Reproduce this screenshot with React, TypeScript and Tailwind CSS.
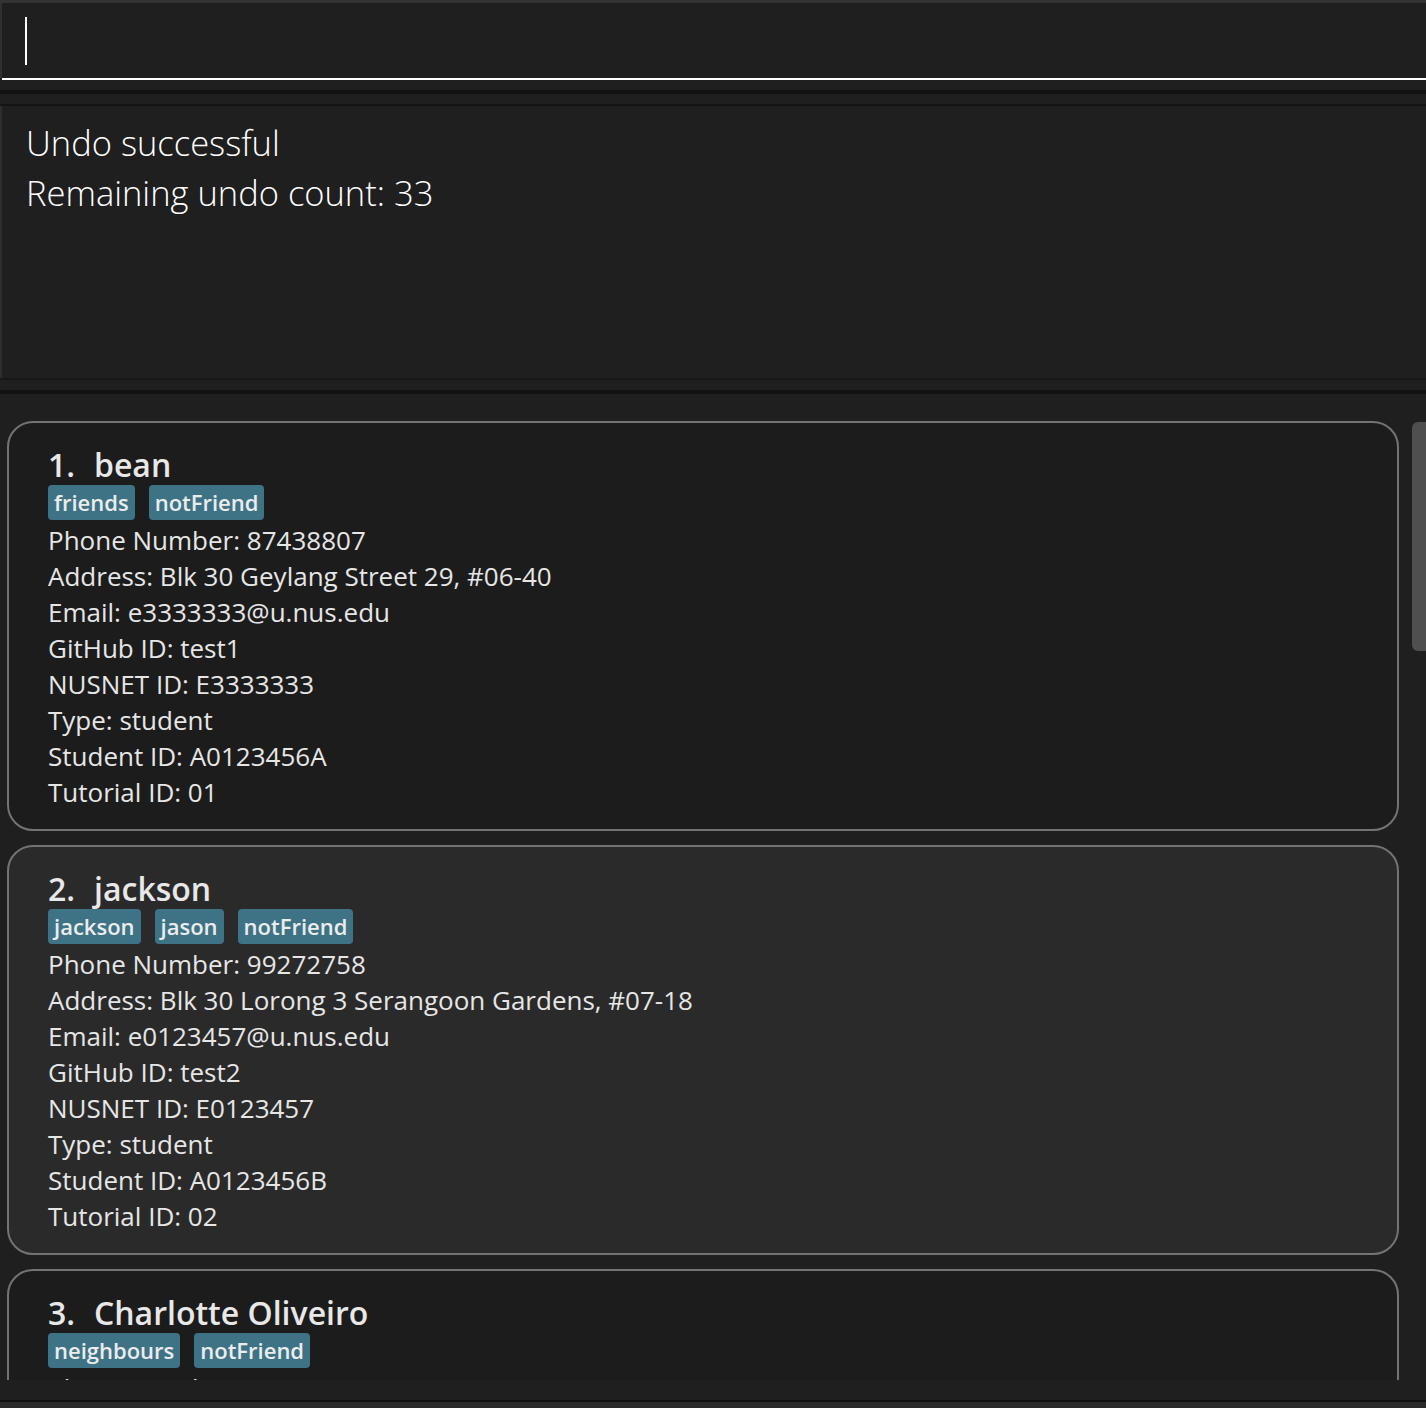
import React from 'react';

interface Person {
  name: string;
  tags: string[];
  phone: string;
  address: string;
  email: string;
  github: string;
  nusnet: string;
  type: string;
  studentId: string;
  tutorialId: string;
}

const people: Person[] = [
  {
    name: 'bean',
    tags: ['friends', 'notFriend'],
    phone: '87438807',
    address: 'Blk 30 Geylang Street 29, #06-40',
    email: 'e3333333@u.nus.edu',
    github: 'test1',
    nusnet: 'E3333333',
    type: 'student',
    studentId: 'A0123456A',
    tutorialId: '01',
  },
  {
    name: 'jackson',
    tags: ['jackson', 'jason', 'notFriend'],
    phone: '99272758',
    address: 'Blk 30 Lorong 3 Serangoon Gardens, #07-18',
    email: 'e0123457@u.nus.edu',
    github: 'test2',
    nusnet: 'E0123457',
    type: 'student',
    studentId: 'A0123456B',
    tutorialId: '02',
  },
  {
    name: 'Charlotte Oliveiro',
    tags: ['neighbours', 'notFriend'],
    phone: '93210283',
    address: 'Blk 11 Ang Mo Kio Street 74, #11-04',
    email: 'e0123458@u.nus.edu',
    github: 'test3',
    nusnet: 'E0123458',
    type: 'student',
    studentId: 'A0123456C',
    tutorialId: '03',
  },
];

const PersonCard = ({ person, index }: { person: Person; index: number }) => {
  const rows = [
    `Phone Number: ${person.phone}`,
    `Address: ${person.address}`,
    `Email: ${person.email}`,
    `GitHub ID: ${person.github}`,
    `NUSNET ID: ${person.nusnet}`,
    `Type: ${person.type}`,
    `Student ID: ${person.studentId}`,
    `Tutorial ID: ${person.tutorialId}`,
  ];
  return (
    <div
      className={`shrink-0 h-[410px] border-2 border-[#737373] rounded-[26px] pl-[39px] pt-[21px] ${
        index % 2 === 0 ? 'bg-[#1c1c1c]' : 'bg-[#2a2a2a]'
      }`}
    >
      <div className="flex text-[32px] leading-[41px] font-semibold text-[#e8e8e8]">
        <span className="w-[46px]">{index + 1}.</span>
        <span>{person.name}</span>
      </div>
      <div className="flex gap-[14px]">
        {person.tags.map((t) => (
          <span
            key={t}
            className="h-[35px] px-[6px] rounded-[4px] bg-[#3e7386] text-[22px] leading-[35px] font-semibold text-[#ececec]"
          >
            {t}
          </span>
        ))}
      </div>
      <div className="mt-[2px] text-[26px] leading-[36px] text-[#e6e6e6]">
        {rows.map((r) => (
          <div key={r}>{r}</div>
        ))}
      </div>
    </div>
  );
};

export default function App() {
  return (
    <div
      className="w-[1426px] h-[1408px] bg-[#1f1f1f] flex flex-col overflow-hidden"
      style={{ fontFamily: '"Open Sans", "Noto Sans", sans-serif' }}
    >
      {/* command box */}
      <div className="shrink-0 h-[3px] bg-[#333333]" />
      <div className="shrink-0 h-[75px] border-l-2 border-[#303030] flex items-center pl-[23px]">
        <div className="w-[2px] h-[48px] bg-white" />
      </div>
      <div className="shrink-0 h-[2px] ml-[2px] bg-white" />
      <div className="shrink-0 h-[10px]" />
      <div className="shrink-0 h-[4px] bg-[#121212]" />
      <div className="shrink-0 h-[10px]" />
      <div className="shrink-0 h-[2px] bg-[#141414]" />

      {/* result display */}
      <div className="shrink-0 h-[272px] border-l-2 border-[#2e2e2e] pl-[24px] pt-[12px] text-[34.5px] leading-[50px] font-light text-white">
        <div>Undo successful</div>
        <div>Remaining undo count: 33</div>
      </div>
      <div className="shrink-0 h-[2px] bg-[#171717]" />
      <div className="shrink-0 h-[10px]" />
      <div className="shrink-0 h-[4px] bg-[#121212]" />

      {/* person list */}
      <div className="relative shrink-0 h-[986px] overflow-hidden">
        <div className="flex flex-col gap-[14px] pt-[27px] pl-[7px] pr-[27px]">
          {people.map((p, i) => (
            <PersonCard key={p.name} person={p} index={i} />
          ))}
        </div>
        <div className="absolute right-0 top-[28px] w-[14px] h-[229px] rounded-l-[6px] bg-[#4f4f4f]" />
      </div>

      <div className="shrink-0 h-[20px]" />
      <div className="shrink-0 h-[2px] bg-[#111111]" />
      <div className="flex-1 bg-[#2b2b2b]" />
    </div>
  );
}
